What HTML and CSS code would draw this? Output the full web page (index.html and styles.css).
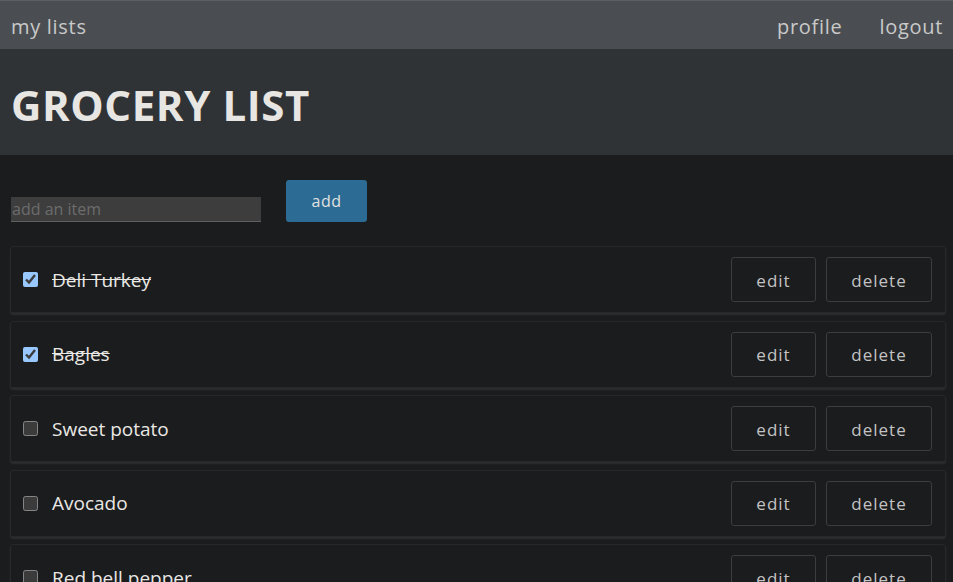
FILE: index.html
```html
<!DOCTYPE html>
<html lang="en">
<head>
<meta charset="utf-8">
<title>Grocery List</title>
<link rel="stylesheet" href="styles.css">
</head>
<body>
<nav class="nav">
  <a class="nav-link" href="#">my lists</a>
  <div class="nav-right">
    <a class="nav-link" href="#">profile</a>
    <a class="nav-link" href="#">logout</a>
  </div>
</nav>
<header class="header">
  <h1 class="title">GROCERY LIST</h1>
</header>
<main class="main">
  <form class="add-form">
    <input class="add-input" type="text" placeholder="add an item">
    <button class="add-btn" type="button">add</button>
  </form>
  <ul class="items">
    <li class="item">
      <label class="item-label"><input class="check" type="checkbox" checked><span class="item-text done">Deli Turkey</span></label>
      <div class="actions"><button class="btn btn-edit" type="button">edit</button><button class="btn btn-delete" type="button">delete</button></div>
    </li>
    <li class="item">
      <label class="item-label"><input class="check" type="checkbox" checked><span class="item-text done">Bagles</span></label>
      <div class="actions"><button class="btn btn-edit" type="button">edit</button><button class="btn btn-delete" type="button">delete</button></div>
    </li>
    <li class="item">
      <label class="item-label"><input class="check" type="checkbox"><span class="item-text">Sweet potato</span></label>
      <div class="actions"><button class="btn btn-edit" type="button">edit</button><button class="btn btn-delete" type="button">delete</button></div>
    </li>
    <li class="item">
      <label class="item-label"><input class="check" type="checkbox"><span class="item-text">Avocado</span></label>
      <div class="actions"><button class="btn btn-edit" type="button">edit</button><button class="btn btn-delete" type="button">delete</button></div>
    </li>
    <li class="item">
      <label class="item-label"><input class="check" type="checkbox"><span class="item-text">Red bell pepper</span></label>
      <div class="actions"><button class="btn btn-edit" type="button">edit</button><button class="btn btn-delete" type="button">delete</button></div>
    </li>
  </ul>
</main>
</body>
</html>
```

FILE: styles.css
```css
html { color-scheme: dark; }
* { box-sizing: border-box; }
body {
  margin: 0;
  background: #1b1c1e;
  font-family: "Open Sans", "Noto Sans", sans-serif;
  color: #e8e6e3;
}
.nav {
  display: flex;
  justify-content: space-between;
  align-items: center;
  height: 49px;
  padding: 2px 10px 0 11px;
  background: #4a4e52;
  border-top: 1px solid #5c5f62;
}
.nav-right { display: flex; gap: 37px; }
.nav-link {
  color: #c9c9c9;
  text-decoration: none;
  font-size: 20px;
  letter-spacing: 0.7px;
}
.header {
  height: 106px;
  background: #303336;
  display: flex;
  align-items: center;
  padding: 0 11px;
}
.title {
  margin: 4px 0 0;
  font-size: 42px;
  font-weight: 700;
  letter-spacing: 0.6px;
  color: #e8e6e3;
}
.main { padding: 25px 7px 0 10px; }
.add-form {
  display: flex;
  align-items: flex-end;
  gap: 25px;
  padding-left: 1px;
  margin-bottom: 24px;
}
.add-input {
  width: 250px;
  height: 25px;
  padding: 0 1px;
  background: #3d3d3d;
  border: none;
  border-bottom: 1px solid #5e5e5e;
  color: #ddd;
  font-family: "Open Sans", sans-serif;
  font-size: 16px;
  outline: none;
}
.add-input::placeholder { color: #6c6c6c; }
.add-btn {
  width: 81px;
  height: 42px;
  background: #2c6b93;
  border: none;
  border-radius: 3px;
  color: #e1e1e1;
  font-family: "Open Sans", sans-serif;
  font-size: 16px;
  letter-spacing: 0.5px;
}
.items { list-style: none; margin: 0; padding: 0; }
.item {
  display: flex;
  align-items: center;
  justify-content: space-between;
  height: 67px;
  margin-bottom: 7.5px;
  padding: 0 13px 0 12px;
  background: #1b1c1e;
  border: 1px solid #26282a;
  border-radius: 3px;
  box-shadow: 0 2px 2px #2c2f31;
}
.item-label { display: flex; align-items: center; gap: 14px; }
.check {
  width: 15px;
  height: 15px;
  margin: 0 0 0 0;
}
.item-text { font-size: 19px; color: #eae8e5; }
.item-text.done { text-decoration: line-through; }
.actions { display: flex; gap: 10px; }
.btn {
  height: 45px;
  background: #1b1c1e;
  border: 1px solid #3b3d40;
  border-radius: 3px;
  color: #c3c3c3;
  font-family: "Open Sans", sans-serif;
  font-size: 17px;
  letter-spacing: 1px;
  padding-top: 2px;
}
.btn-edit { width: 85px; }
.btn-delete { width: 106px; }
```
